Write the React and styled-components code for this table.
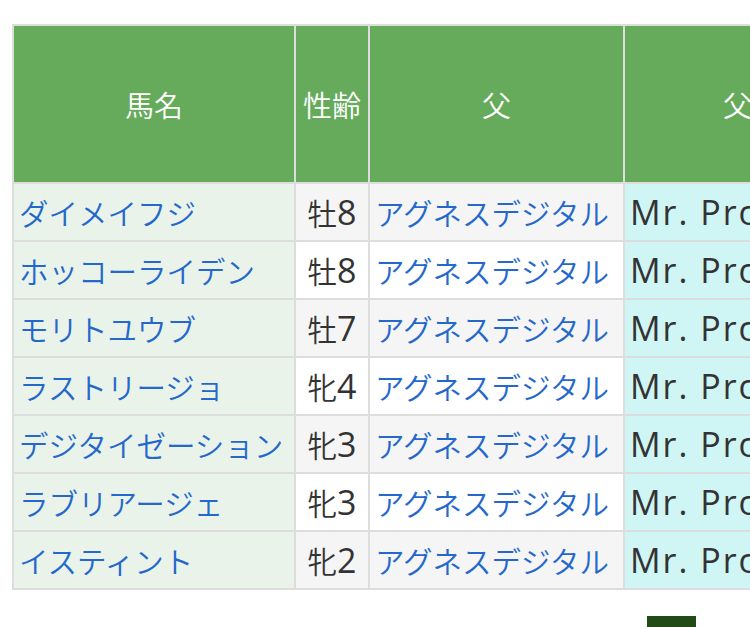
import React from 'react';
import styled, { createGlobalStyle } from 'styled-components';

const GlobalStyle = createGlobalStyle`
    html, body {
        margin: 0;
        padding: 0;
        background: #ffffff;
        overflow: hidden;
    }
    body {
        font-family: "Noto Sans CJK JP", "Noto Sans", sans-serif;
        color: #333333;
    }
`;

const Page = styled.div`
    padding: 24px 0 0 12px;
    width: 1000px;
`;

const Grid = styled.div`
    display: grid;
    grid-template-columns: 280px 72px 253px 254px;
    grid-auto-rows: 56px;
    grid-template-rows: 156px;
    gap: 2px;
    padding: 2px;
    background-color: #dddddd;
    width: max-content;
`;

const HeadCell = styled.div`
    display: flex;
    align-items: center;
    justify-content: center;
    background-color: #66ab5c;
    color: #ffffff;
    font-size: 29px;
    font-weight: 350;
    white-space: nowrap;
    overflow: hidden;
`;

const Cell = styled.div`
    display: flex;
    align-items: center;
    justify-content: ${({ $center }) => ($center ? 'center' : 'flex-start')};
    padding: 0 5px;
    font-size: 29.5px;
    font-weight: 350;
    white-space: nowrap;
    overflow: hidden;
    background-color: ${({ $bg }) => $bg};
`;

const Latin = styled.span`
    font-family: "Open Sans", "DejaVu Sans", sans-serif;
    font-size: 34px;
    font-weight: 400;
    letter-spacing: ${({ $spaced }) => ($spaced ? '2px' : '0')};
`;

const Link = styled.a`
    color: #2468cc;
    text-decoration: none;
`;

const Footer = styled.div`
    display: flex;
    padding: 26px 0 0 635px;
`;

const MoreButton = styled.div`
    width: 49px;
    height: 20px;
    background-color: #214a14;
`;

const horses = [
    { name: 'ダイメイフジ', sex: '牡', age: '8' },
    { name: 'ホッコーライデン', sex: '牡', age: '8' },
    { name: 'モリトユウブ', sex: '牡', age: '7' },
    { name: 'ラストリージョ', sex: '牝', age: '4' },
    { name: 'デジタイゼーション', sex: '牝', age: '3' },
    { name: 'ラブリアージェ', sex: '牝', age: '3' },
    { name: 'イスティント', sex: '牝', age: '2' },
];

const App = () => {
    return (
        <Page>
            <GlobalStyle />
            <Grid>
                <HeadCell>馬名</HeadCell>
                <HeadCell>性齢</HeadCell>
                <HeadCell>父</HeadCell>
                <HeadCell>父父</HeadCell>
                {horses.map((h, i) => {
                    const stripe = i % 2 === 0 ? '#f5f5f5' : '#ffffff';
                    return (
                        <React.Fragment key={h.name}>
                            <Cell $bg="#eaf3e9"><Link href="#">{h.name}</Link></Cell>
                            <Cell $bg={stripe} $center>{h.sex}<Latin>{h.age}</Latin></Cell>
                            <Cell $bg={stripe}><Link href="#">アグネスデジタル</Link></Cell>
                            <Cell $bg="#d0f5f5"><Latin $spaced>Mr. Prospector</Latin></Cell>
                        </React.Fragment>
                    );
                })}
            </Grid>
            <Footer>
                <MoreButton />
            </Footer>
        </Page>
    );
};

export default App;
